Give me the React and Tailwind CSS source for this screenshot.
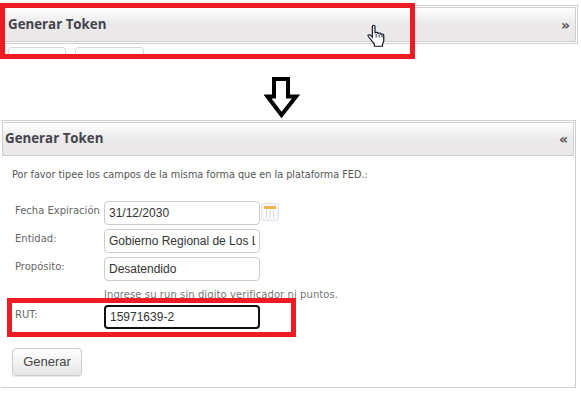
function PanelHeader({ glyph, className }) {
  return (
    <div className={`flex items-center justify-between border border-[#cfcfcf] bg-gradient-to-b from-[#ffffff] via-[#ebe9ea] to-[#eae8e9] ${className}`}>
      <span className="font-['Open_Sans',sans-serif] text-[13.300px] font-bold text-[#44444c]">Generar Token</span>
      <span className="font-['DejaVu_Sans',sans-serif] text-[14px] font-bold leading-none text-[#555]">{glyph}</span>
    </div>
  );
}

function Field({ label, value, focused, children, className = '' }) {
  return (
    <div className={`flex items-start ${className}`}>
      <label className="w-[89px] pt-[3px] font-['DejaVu_Sans',sans-serif] text-[10px] leading-[14px] text-[#666]">{label}</label>
      <input
        readOnly
        value={value}
        className={`h-[24px] w-[156px] rounded-[4px] bg-white px-[4px] font-['Liberation_Sans',sans-serif] text-[12px] text-[#333] outline-none ${focused ? 'border-2 border-[#111]' : 'border border-[#cccccc]'}`}
      />
      {children}
    </div>
  );
}

function CalendarIcon() {
  return (
    <svg width="18" height="18" viewBox="0 0 18 18" className="ml-[1px] mt-[2px]">
      <rect x="0.5" y="0.5" width="17" height="17" rx="2" fill="#f3f5f9" stroke="#e3e5ea" />
      <rect x="3" y="3" width="12" height="3" fill="#f0b54a" />
      <rect x="3" y="6" width="12" height="9" fill="#ffffff" />
      <path d="M5.500 7v8M9 7v8M12.500 7v8" stroke="#cfd6e4" strokeWidth="1" />
    </svg>
  );
}

function ArrowDown() {
  return (
    <svg width="36" height="42" viewBox="0 0 36 42">
      <path d="M10 2h14v17.500h8L17.500 38 3.500 19.500H10z" fill="#fff" stroke="#000" strokeWidth="4" strokeLinejoin="miter" />
    </svg>
  );
}

function HandCursor() {
  return (
    <svg width="19" height="24" viewBox="1 0 16 24" preserveAspectRatio="none">
      <path
        d="M5.500 2.200c0-1.400 2.200-1.400 2.200 0v7c.2-1.200 2.300-1.200 2.500 0v.8c.2-1.200 2.300-1.200 2.500 0v.8c.3-1 2.300-1 2.400.3v5.400c0 1.500-.6 2.500-1 3.500v2.200H7.200v-2.200c-.8-1.500-2-2.700-3.700-5.500-.9-1.500-2-2.500-1.700-3.300.4-1 1.800-.5 2.400.3l1.300 1.700z"
        fill="#fff"
        stroke="#101428"
        strokeWidth="1"
      />
      <path d="M8.700 10v3.500M11.200 10.500v3M13.700 11v2.500" stroke="#101428" strokeWidth="0.8" />
    </svg>
  );
}

export default function App() {
  return (
    <div className="relative h-[401px] w-[581px] overflow-hidden bg-white">

      {/* collapsed panel */}
      <div className="ml-[-4px] mr-[3px] pt-[5px]">
        <div className="border border-[#cfcfcf] p-[1px]">
          <PanelHeader glyph="»" className="h-[35px] pl-[9px] pr-[5px]" />
        </div>
        <div className="ml-[12px] mt-[3px] flex gap-[9px]">
          <div className="h-[8px] w-[58px] rounded-t-[4px] border border-b-0 border-[#d8d8d8]" />
          <div className="h-[8px] w-[69px] rounded-t-[4px] border border-b-0 border-[#d8d8d8]" />
        </div>
      </div>

      <div className="flex h-[65px] items-end pb-[1px] pl-[264px]">
        <ArrowDown />
      </div>

      {/* expanded panel */}
      <div className="ml-[1px] mr-[5px] h-[268px] border border-l-0 border-[#cfcfcf] px-[1px] pt-[1px]">
        <PanelHeader glyph="«" className="h-[34px] pl-[2px] pr-[5px]" />

        <p className="ml-[10px] mt-[12px] font-['DejaVu_Sans',sans-serif] text-[9.7px] leading-[14px] text-[#555]">
          Por favor tipee los campos de la misma forma que en la plataforma FED.:
        </p>

        <div className="ml-[13px] mt-[19px] flex flex-col gap-[4px]">
          <Field label="Fecha Expiración" value="31/12/2030"><CalendarIcon /></Field>
          <Field label="Entidad:" value="Gobierno Regional de Los Lagos" />
          <Field label="Propósito:" value="Desatendido" />
        </div>

        <p className="ml-[102px] mt-[7px] font-['DejaVu_Sans',sans-serif] text-[10px] leading-[13px] tracking-[0.08px] text-[#777]">
          Ingrese su run sin digito verificador ni puntos.
        </p>
        <Field label="RUT:" value="15971639-2" focused className="ml-[13px] mt-[4px]" />

        <button className="ml-[10px] mt-[19px] h-[28px] w-[70px] rounded-[4px] border border-[#cccccc] bg-gradient-to-b from-white to-[#e6e6e6] font-['Liberation_Sans',sans-serif] text-[13px] text-[#444] shadow-[0_1px_1px_rgba(0,0,0,0.1)]">
          Generar
        </button>
      </div>

      {/* annotations drawn over the screenshot */}
      <div className="absolute left-0 top-[3px] h-[56px] w-[415px] border-[5px] border-[#ed1c24]" />
      <div className="absolute left-[7px] top-[298px] h-[39px] w-[289px] border-[5px] border-[#ed1c24]" />
      <div className="absolute left-[367px] top-[24px]"><HandCursor /></div>
    </div>
  );
}
